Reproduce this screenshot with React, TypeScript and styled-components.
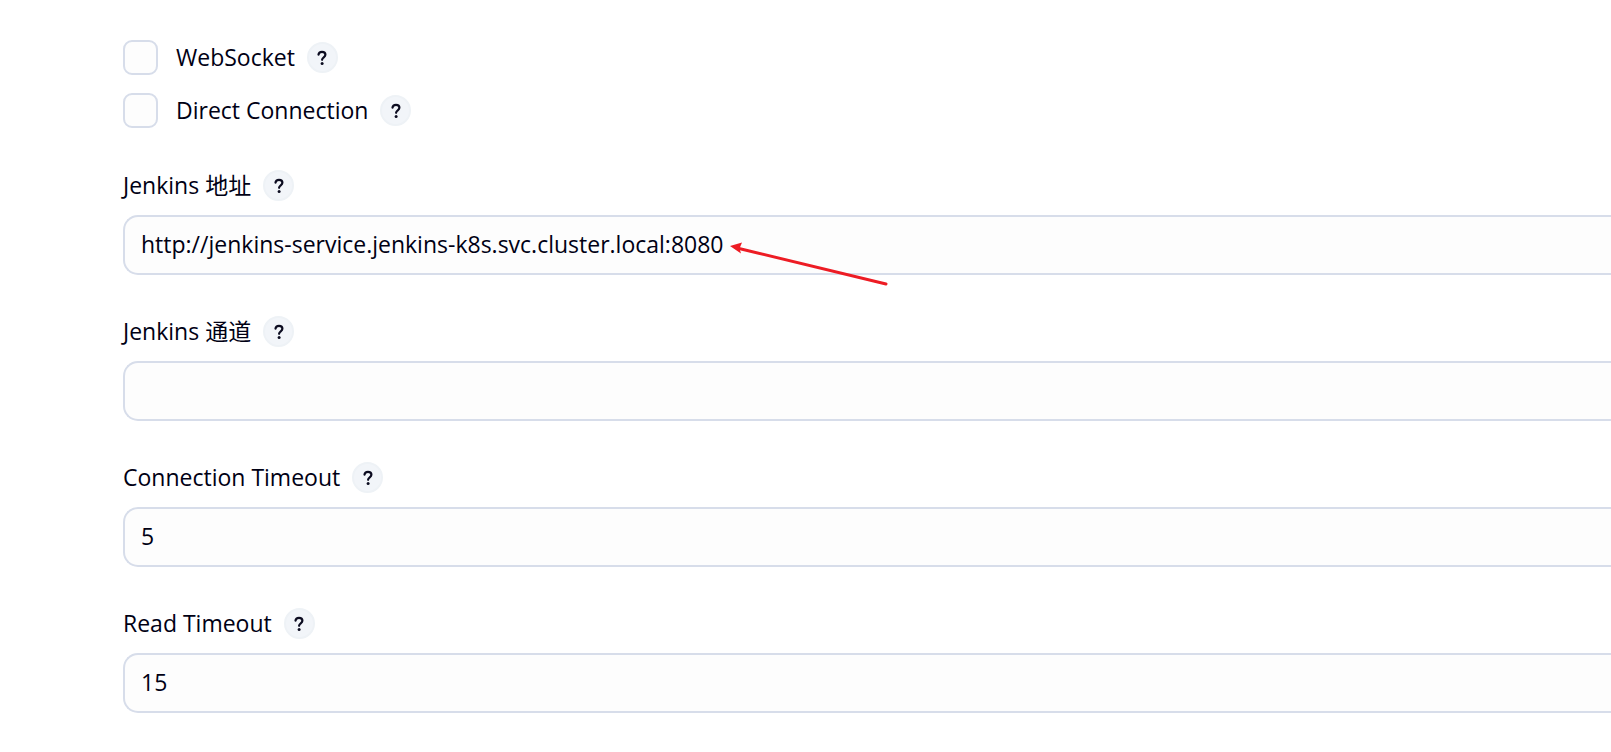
import React, { useId } from "react";
import styled, { createGlobalStyle } from "styled-components";

const GlobalStyle = createGlobalStyle`
  *, *::before, *::after { box-sizing: border-box; }
  body {
    margin: 0;
    background: #ffffff;
    color: #000014;
    font-family: "Open Sans", "Noto Sans CJK SC", sans-serif;
    font-size: 23px;
    line-height: 28px;
  }
`;

const Form = styled.form`
  padding: 40px 0 38px 123px;
`;

const CheckList = styled.div`
  display: flex;
  flex-direction: column;
  gap: 18px;
  margin-bottom: 42px;
`;

const Row = styled.div`
  display: flex;
  align-items: center;
  gap: 12px;
`;

const CheckLabel = styled.label`
  display: flex;
  align-items: center;
  gap: 18px;
`;

const LabelText = styled.span`
  display: block;
  padding-bottom: 2px;
`;

const Checkbox = styled.input`
  appearance: none;
  flex: none;
  width: 35px;
  height: 35px;
  margin: 0;
  border: 2px solid #d7ddea;
  border-radius: 9px;
  background: #fdfdfd;

  &:checked {
    background: #0b6aa2;
  }
`;

const HelpButton = styled.button`
  display: flex;
  align-items: center;
  justify-content: center;
  flex: none;
  width: 31px;
  height: 31px;
  padding: 0;
  border: 2px solid #eef2f6;
  border-radius: 50%;
  background: #f2f5f9;
  color: #0c0c20;
`;

const Fields = styled.div`
  display: flex;
  flex-direction: column;
  gap: 41px;
`;

const Control = styled.div`
  position: relative;
  margin-top: 14px;
`;

const TextInput = styled.input`
  display: block;
  width: 100%;
  height: 60px;
  padding: 0 16px 3px;
  border: 2px solid #d7ddea;
  border-right: 0;
  border-radius: 15px 0 0 15px;
  outline: 0;
  background: #fdfdfd;
  color: inherit;
  font: inherit;
`;

const Arrow = styled.svg`
  position: absolute;
  top: 24px;
  left: 604px;
  pointer-events: none;
`;

function Help({ topic }: { topic: string }) {
  return (
    <HelpButton type="button" aria-label={`Help for feature: ${topic}`}>
      <svg width="12" height="16" viewBox="0 0 12 16" fill="none" aria-hidden="true">
        <path
          d="M2.5 4.7C2.7 2.8 4.1 1.9 6 1.9C8 1.9 9.4 3 9.4 4.8C9.4 7.3 6.1 7.3 6.1 9.8"
          stroke="currentColor"
          strokeWidth="2.2"
          strokeLinecap="round"
          strokeLinejoin="round"
        />
        <circle cx="6.1" cy="13.6" r="1.5" fill="currentColor" />
      </svg>
    </HelpButton>
  );
}

function CheckField({ label }: { label: string }) {
  return (
    <Row>
      <CheckLabel>
        <Checkbox type="checkbox" />
        <LabelText>{label}</LabelText>
      </CheckLabel>
      <Help topic={label} />
    </Row>
  );
}

interface TextFieldProps {
  label: string;
  value?: string;
  children?: React.ReactNode;
}

function TextField({ label, value = "", children }: TextFieldProps) {
  const id = useId();
  return (
    <div>
      <Row>
        <label htmlFor={id}>
          <LabelText>{label}</LabelText>
        </label>
        <Help topic={label} />
      </Row>
      <Control>
        <TextInput id={id} type="text" defaultValue={value} />
        {children}
      </Control>
    </div>
  );
}

export default function App() {
  return (
    <>
      <GlobalStyle />
      <Form>
        <CheckList>
          <CheckField label="WebSocket" />
          <CheckField label="Direct Connection" />
        </CheckList>
        <Fields>
          <TextField label="Jenkins 地址" value="http://jenkins-service.jenkins-k8s.svc.cluster.local:8080">
            <Arrow width="164" height="48" viewBox="0 0 164 48" aria-hidden="true">
              <path d="M12 9.5L159 45" stroke="#ed1c24" strokeWidth="3" strokeLinecap="round" />
              <path d="M3 7L15 3.5L12.5 9.5L14 14.5Z" fill="#ed1c24" />
            </Arrow>
          </TextField>
          <TextField label="Jenkins 通道" />
          <TextField label="Connection Timeout" value="5" />
          <TextField label="Read Timeout" value="15" />
        </Fields>
      </Form>
    </>
  );
}
